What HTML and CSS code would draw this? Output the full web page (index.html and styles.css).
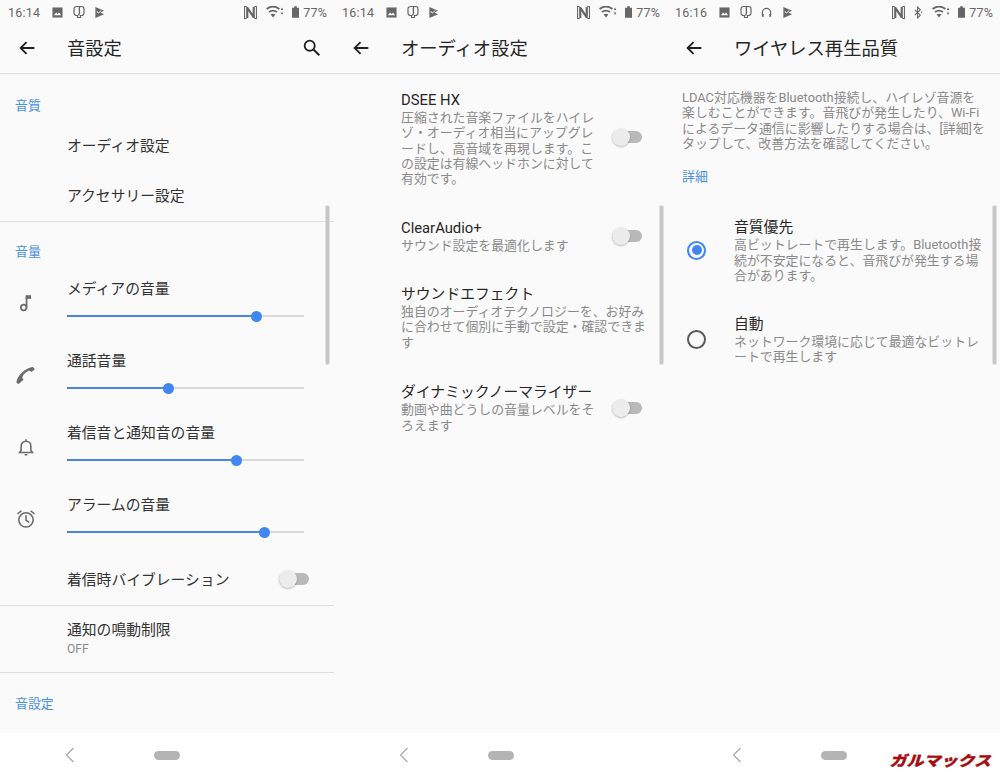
FILE: index.html
```html
<!DOCTYPE html>
<html lang="ja">
<head>
<meta charset="utf-8">
<title>音設定</title>
<link rel="stylesheet" href="styles.css">
</head>
<body>
<svg class="defs" width="0" height="0" aria-hidden="true">
  <symbol id="i-back" viewBox="0 0 24 24"><path d="M20 12H5M11.500 5.500L5 12l6.500 6.500" fill="none" stroke="currentColor" stroke-width="2"/></symbol>
  <symbol id="i-search" viewBox="0 0 24 24"><circle cx="9.500" cy="9.500" r="5.500" fill="none" stroke="currentColor" stroke-width="2"/><path d="M13.600 13.600L20 20" stroke="currentColor" stroke-width="2.200"/></symbol>
  <symbol id="i-image" viewBox="0 0 12 12"><path d="M.5.500h11v11H.5z" fill="currentColor"/><path d="M2 9l2.500-3 1.700 1.500 1.500-1.500L10 9z" fill="#fafafa"/></symbol>
  <symbol id="i-app" viewBox="0 0 12 14"><path d="M3.500 1.500h5a2.500 2.500 0 0 1 2.500 2.500v4a2.500 2.500 0 0 1-2.500 2.500h-1v2h-3v-2h-1A2.500 2.500 0 0 1 1 8V4a2.500 2.500 0 0 1 2.500-2.500z" fill="none" stroke="currentColor" stroke-width="1.200"/><path d="M7 1.500C4.500 4 8.500 6.500 5.500 10.500" fill="none" stroke="currentColor" stroke-width="1.400"/></symbol>
  <symbol id="i-play" viewBox="0 0 12 12"><path d="M1.500 0l9.500 4-4 2 4 2-9.500 4z" fill="currentColor"/><path d="M3 4.500l1.500 2.200L8 3.800" fill="none" stroke="#fafafa" stroke-width="1"/></symbol>
  <symbol id="i-phones" viewBox="0 0 12 12"><path d="M1.500 9V6a4.500 4.500 0 0 1 9 0v3" fill="none" stroke="currentColor" stroke-width="1.300"/><path d="M1 7.500h2v3H1zM9 7.500h2v3H9z" fill="currentColor"/></symbol>
  <symbol id="i-nfc" viewBox="0 0 12 12"><path d="M2.500.500H.5v11h2M9.500.500h2v11h-2" fill="none" stroke="currentColor" stroke-width="1"/><path d="M3 1v10M9 1v10M3 1.500l6 9" fill="none" stroke="currentColor" stroke-width="2"/></symbol>
  <symbol id="i-bt" viewBox="0 0 10 14"><path d="M1 4l6 6-3 3V1l3 3-6 6" fill="none" stroke="currentColor" stroke-width="1.200"/><path d="M8.500 6.200v1.600" stroke="currentColor" stroke-width="1.200"/></symbol>
  <symbol id="i-wifi" viewBox="0 0 18 12"><path d="M.6 3C4.500 0 9.500 0 13.400 3M3 6c2.600-1.800 5.400-1.800 8 0" fill="none" stroke="currentColor" stroke-width="1.900"/><path d="M7 11.500L4.600 8.400c1.400-.8 3.400-.8 4.800 0z" fill="currentColor"/><path d="M16 1.500L14.700 4h2.600zM16 9l-1.300-2.500h2.600z" fill="currentColor"/></symbol>
  <symbol id="i-batt" viewBox="0 0 8 13"><path d="M2.500 0h3v1.500H8V13H0V1.500h2.500z" fill="currentColor"/></symbol>
  <symbol id="i-note" viewBox="0 0 24 24"><circle cx="9.500" cy="17" r="3.100" fill="none" stroke="currentColor" stroke-width="1.900"/><path d="M12.600 17V5" fill="none" stroke="currentColor" stroke-width="1.900"/><path d="M11.700 3.500h5.800v4h-5.800z" fill="currentColor"/></symbol>
  <symbol id="i-phone" viewBox="0 0 24 24"><path d="M3.500 22l-1.800-1.800c-.3-.3-.3-.8 0-1.100C3 12 11 5 18.800 3.300c.4-.1.800 0 1 .3l1.900 2.200-3.800 2.900-2.200-1.500C12 8.500 9 11.500 7.800 15l1.500 2.200z" fill="currentColor"/></symbol>
  <symbol id="i-bell" viewBox="0 0 24 24"><path d="M5 18h14l-1.700-2.500V11a5.300 5.300 0 0 0-10.600 0v4.500z" fill="none" stroke="currentColor" stroke-width="1.700"/><path d="M10.500 20.500h3M12 3.500v2" stroke="currentColor" stroke-width="1.700"/></symbol>
  <symbol id="i-alarm" viewBox="0 0 24 24"><circle cx="12" cy="13" r="7.800" fill="none" stroke="currentColor" stroke-width="1.700"/><path d="M12 8v5.500l3.500 2M2.800 6.500L7 3M21.200 6.500L17 3" fill="none" stroke="currentColor" stroke-width="1.700"/></symbol>
  <symbol id="i-navback" viewBox="0 0 10 16"><path d="M8.500 1L1.500 8l7 7" fill="none" stroke="currentColor" stroke-width="1.200"/></symbol>
</svg>

<main class="screens">

  <section class="phone">
    <header class="status">
      <span class="time">16:14</span>
      <span class="notif">
        <svg class="s12"><use href="#i-image"/></svg>
        <svg class="s14"><use href="#i-app"/></svg>
        <svg class="s12"><use href="#i-play"/></svg>
      </span>
      <span class="sys">
        <svg class="s13 nfc"><use href="#i-nfc"/></svg>
        <svg class="wifi"><use href="#i-wifi"/></svg>
        <svg class="batt"><use href="#i-batt"/></svg>
        <span class="pct">77%</span>
      </span>
    </header>
    <div class="appbar">
      <svg class="back"><use href="#i-back"/></svg>
      <h1 class="title">音設定</h1>
      <svg class="search"><use href="#i-search"/></svg>
    </div>
    <div class="content">
      <h2 class="cat cat-first">音質</h2>
      <div class="row row-50">オーディオ設定</div>
      <div class="row row-50">アクセサリー設定</div>
      <hr class="rule">
      <h2 class="cat cat-vol">音量</h2>
      <div class="vol">
        <svg class="vol-icon"><use href="#i-note"/></svg>
        <div class="vol-main">
          <div class="vol-label">メディアの音量</div>
          <div class="track"><div class="fill" style="width:80%"></div></div>
        </div>
      </div>
      <div class="vol">
        <svg class="vol-icon"><use href="#i-phone"/></svg>
        <div class="vol-main">
          <div class="vol-label">通話音量</div>
          <div class="track"><div class="fill" style="width:43%"></div></div>
        </div>
      </div>
      <div class="vol">
        <svg class="vol-icon"><use href="#i-bell"/></svg>
        <div class="vol-main">
          <div class="vol-label">着信音と通知音の音量</div>
          <div class="track"><div class="fill" style="width:71.600%"></div></div>
        </div>
      </div>
      <div class="vol">
        <svg class="vol-icon"><use href="#i-alarm"/></svg>
        <div class="vol-main">
          <div class="vol-label">アラームの音量</div>
          <div class="track"><div class="fill" style="width:83.400%"></div></div>
        </div>
      </div>
      <div class="row vib">
        <span>着信時バイブレーション</span>
        <span class="switch"></span>
      </div>
      <hr class="rule">
      <div class="row limit">
        <div>通知の鳴動制限</div>
        <div class="off">OFF</div>
      </div>
      <hr class="rule">
      <h2 class="cat cat-last">音設定</h2>
    </div>
    <span class="scroll"></span>
    <nav class="nav">
      <svg class="nav-back"><use href="#i-navback"/></svg>
      <span class="pill"></span>
    </nav>
  </section>

  <section class="phone">
    <header class="status">
      <span class="time">16:14</span>
      <span class="notif">
        <svg class="s12"><use href="#i-image"/></svg>
        <svg class="s14"><use href="#i-app"/></svg>
        <svg class="s12"><use href="#i-play"/></svg>
      </span>
      <span class="sys">
        <svg class="s13 nfc"><use href="#i-nfc"/></svg>
        <svg class="wifi"><use href="#i-wifi"/></svg>
        <svg class="batt"><use href="#i-batt"/></svg>
        <span class="pct">77%</span>
      </span>
    </header>
    <div class="appbar">
      <svg class="back"><use href="#i-back"/></svg>
      <h1 class="title">オーディオ設定</h1>
    </div>
    <div class="content audio">
      <div class="pref pref-dsee">
        <div class="pref-text">
          <div class="pref-title">DSEE HX</div>
          <p class="desc">圧縮された音楽ファイルをハイレゾ・オーディオ相当にアップグレードし、高音域を再現します。この設定は有線ヘッドホンに対して有効です。</p>
        </div>
        <span class="switch"></span>
      </div>
      <div class="pref pref-clear">
        <div class="pref-text">
          <div class="pref-title">ClearAudio+</div>
          <p class="desc">サウンド設定を最適化します</p>
        </div>
        <span class="switch"></span>
      </div>
      <div class="pref pref-effect">
        <div class="pref-text wide">
          <div class="pref-title">サウンドエフェクト</div>
          <p class="desc">独自のオーディオテクノロジーを、お好みに合わせて個別に手動で設定・確認できます</p>
        </div>
      </div>
      <div class="pref pref-dyn">
        <div class="pref-text">
          <div class="pref-title">ダイナミックノーマライザー</div>
          <p class="desc">動画や曲どうしの音量レベルをそろえます</p>
        </div>
        <span class="switch"></span>
      </div>
    </div>
    <span class="scroll"></span>
    <nav class="nav">
      <svg class="nav-back"><use href="#i-navback"/></svg>
      <span class="pill"></span>
    </nav>
  </section>

  <section class="phone">
    <header class="status">
      <span class="time">16:16</span>
      <span class="notif">
        <svg class="s12"><use href="#i-image"/></svg>
        <svg class="s14"><use href="#i-app"/></svg>
        <svg class="s12"><use href="#i-phones"/></svg>
        <svg class="s12"><use href="#i-play"/></svg>
      </span>
      <span class="sys">
        <svg class="s13 nfc"><use href="#i-nfc"/></svg>
        <svg class="bt"><use href="#i-bt"/></svg>
        <svg class="wifi"><use href="#i-wifi"/></svg>
        <svg class="batt"><use href="#i-batt"/></svg>
        <span class="pct">77%</span>
      </span>
    </header>
    <div class="appbar">
      <svg class="back"><use href="#i-back"/></svg>
      <h1 class="title">ワイヤレス再生品質</h1>
    </div>
    <div class="content wireless">
      <p class="intro">LDAC対応機器をBluetooth接続し、ハイレゾ音源を楽しむことができます。音飛びが発生したり、Wi-Fiによるデータ通信に影響したりする場合は、[詳細]をタップして、改善方法を確認してください。</p>
      <a class="detail">詳細</a>
      <div class="choice choice-1">
        <span class="radio radio-on"></span>
        <div class="choice-text">
          <div class="pref-title">音質優先</div>
          <p class="desc">高ビットレートで再生します。Bluetooth接続が不安定になると、音飛びが発生する場合があります。</p>
        </div>
      </div>
      <div class="choice choice-2">
        <span class="radio"></span>
        <div class="choice-text">
          <div class="pref-title">自動</div>
          <p class="desc">ネットワーク環境に応じて最適なビットレートで再生します</p>
        </div>
      </div>
    </div>
    <span class="scroll"></span>
    <nav class="nav">
      <svg class="nav-back"><use href="#i-navback"/></svg>
      <span class="pill"></span>
    </nav>
    <span class="logo">ガルマックス</span>
  </section>

</main>
</body>
</html>
```
FILE: styles.css
```css
* { box-sizing: border-box; }
html, body { margin: 0; padding: 0; }
body {
  width: 1000px;
  height: 777px;
  overflow: hidden;
  background: #fafafa;
  color: #212121;
  font-family: Roboto, "Noto Sans CJK JP", sans-serif;
}
.defs { position: absolute; }
.screens {
  display: grid;
  grid-template-columns: 334px 333px 333px;
  height: 777px;
}
.phone {
  position: relative;
  display: flex;
  flex-direction: column;
  height: 777px;
  background: #fafafa;
  overflow: hidden;
}

/* status bar */
.status {
  display: flex;
  align-items: center;
  height: 24px;
  padding: 0 7px 0 8px;
  color: #666;
  font-size: 12.500px;
}
.time { width: 44px; letter-spacing: .2px; }
.notif { display: flex; align-items: center; gap: 9.500px; color: #666; }
.sys { display: flex; align-items: center; margin-left: auto; gap: 8px; color: #666; }
.s12 { width: 11px; height: 11px; }
.s13 { width: 13px; height: 13px; }
.s14 { width: 12px; height: 14px; }
.wifi { width: 18px; height: 12px; margin-left: 1px; }
.bt { width: 9px; height: 13px; margin-left: 1px; }
.batt { width: 7px; height: 12px; }
.pct { margin-left: -4px; letter-spacing: .2px; }

/* app bar */
.appbar {
  position: relative;
  z-index: 1;
  display: flex;
  align-items: center;
  height: 50px;
  padding: 0 0 2px 16px;
  background: #fafafa;
  border-bottom: 1px solid #ebebeb;
}
.appbar::after {
  content: "";
  position: absolute;
  left: 0;
  right: 0;
  top: 100%;
  height: 3px;
  background: linear-gradient(rgba(0, 0, 0, .05), rgba(0, 0, 0, 0));
}
.back { width: 22px; height: 22px; color: #212121; flex: none; }
.title {
  margin: -1px 0 0 29px;
  font-size: 18.300px;
  font-weight: 400;
  color: #262626;
}
.search { width: 22px; height: 22px; margin-left: auto; margin-right: 11px; color: #212121; }

/* list */
.content { flex: 1; min-height: 0; overflow: hidden; }
.cat {
  margin: 0;
  padding-left: 15px;
  font-size: 12.900px;
  font-weight: 400;
  line-height: 18px;
  color: #4a90e2;
}
.cat-first { padding-top: 23px; }
.cat-vol { padding-top: 21px; }
.cat-last { padding-top: 22px; }
.row {
  padding-left: 67px;
  font-size: 14.800px;
  color: #333;
}
.row-50 { height: 50px; padding-bottom: 4px; display: flex; align-items: center; }
.cat-first + .row { margin-top: 6px; }
.rule { margin: 0; border: 0; height: 1px; background: #dedede; flex: none; }

.vol { display: flex; height: 72px; padding-right: 30px; }
.cat-vol + .vol { margin-top: 16px; }
.vol-icon { width: 22px; height: 22px; margin: 15px 0 0 15px; color: #6b6b6b; flex: none; }
.vol-main { flex: 1; margin-left: 30px; }
.vol-label { font-size: 14.800px; line-height: 24px; color: #333; }
.track { position: relative; height: 2px; margin-top: 14px; background: #d9d9d9; }
.fill { position: relative; height: 2px; background: #4a86dc; }
.fill::after {
  content: "";
  position: absolute;
  right: -5.500px;
  top: -4.500px;
  width: 11px;
  height: 11px;
  border-radius: 50%;
  background: #4285f4;
}
.vib {
  display: flex;
  align-items: center;
  justify-content: space-between;
  height: 50px;
  padding-right: 25px;
  padding-bottom: 4px;
  margin-top: -10px;
}
.vib .switch { margin-top: 2px; }
.limit { height: 66px; padding-top: 13px; line-height: 22px; }
.off { margin-top: 1px; font-size: 12px; line-height: 15px; color: #8a8a8a; }

.switch {
  position: relative;
  display: block;
  flex: none;
  width: 30px;
  height: 12px;
  border-radius: 6px;
  background: #b9b9b9;
}
.switch::after {
  content: "";
  position: absolute;
  left: 0;
  top: -3px;
  width: 18px;
  height: 18px;
  border-radius: 50%;
  background: #ececec;
  box-shadow: 0 1px 2px rgba(0, 0, 0, .25);
}

/* audio */
.audio { padding-top: 16px; }
.pref { display: flex; align-items: center; padding: 0 24px 0 67px; }
.pref-text { width: 195px; flex: none; margin-right: 16px; }
.pref-text.wide { width: 250px; margin: 0; }
.pref-title { font-size: 14.800px; line-height: 20px; color: #262626; }
.desc { margin: 0; font-size: 12.900px; line-height: 15.500px; color: #8a8a8a; }
.pref-dsee .desc { line-height: 15.300px; }
.pref-dsee .switch { margin-top: -2px; }
.pref-clear { margin-top: 32px; }
.pref-effect { margin-top: 30px; }
.pref-dyn { margin-top: 32px; }

/* wireless */
.wireless { padding: 16px 14px 0 15px; }
.intro { margin: 0; font-size: 12.900px; line-height: 15.300px; color: #8a8a8a; }
.detail { display: block; margin-top: 17px; font-size: 12.900px; line-height: 18px; color: #4a90e2; }
.choice { display: flex; align-items: center; }
.choice-1 { margin-top: 31px; }
.choice-2 { margin-top: 30px; }
.radio {
  flex: none;
  position: relative;
  width: 19px;
  height: 19px;
  margin-left: 5px;
  border: 2px solid #5a5a5a;
  border-radius: 50%;
}
.radio-on { border-color: #4285f4; }
.radio-on::after {
  content: "";
  position: absolute;
  left: 2.500px;
  top: 2.500px;
  width: 10px;
  height: 10px;
  border-radius: 50%;
  background: #4285f4;
}
.choice-text { margin-left: 28px; flex: 1; }

/* overlays */
.scroll {
  position: absolute;
  right: 3px;
  top: 205px;
  width: 5px;
  height: 160px;
  border: 1px solid #e0e0e0;
  border-radius: 3px;
  background: #c6c6c6;
}
.phone:first-child .scroll { right: 4px; }
.nav {
  display: flex;
  flex: none;
  align-items: center;
  height: 44px;
  background: #fff;
  padding: 0 0 0 65px;
}
.nav-back { width: 10px; height: 16px; color: #a8a8a8; flex: none; }
.pill { width: 26px; height: 9px; margin-left: 79px; border-radius: 5px; background: #b4b4b4; }
.logo {
  position: absolute;
  right: 9px;
  bottom: 8px;
  font-size: 17px;
  font-weight: 900;
  font-style: italic;
  line-height: 16px;
  color: #a50d12;
  -webkit-text-stroke: .4px #a50d12;
  transform: scaleY(.85);
}
```
